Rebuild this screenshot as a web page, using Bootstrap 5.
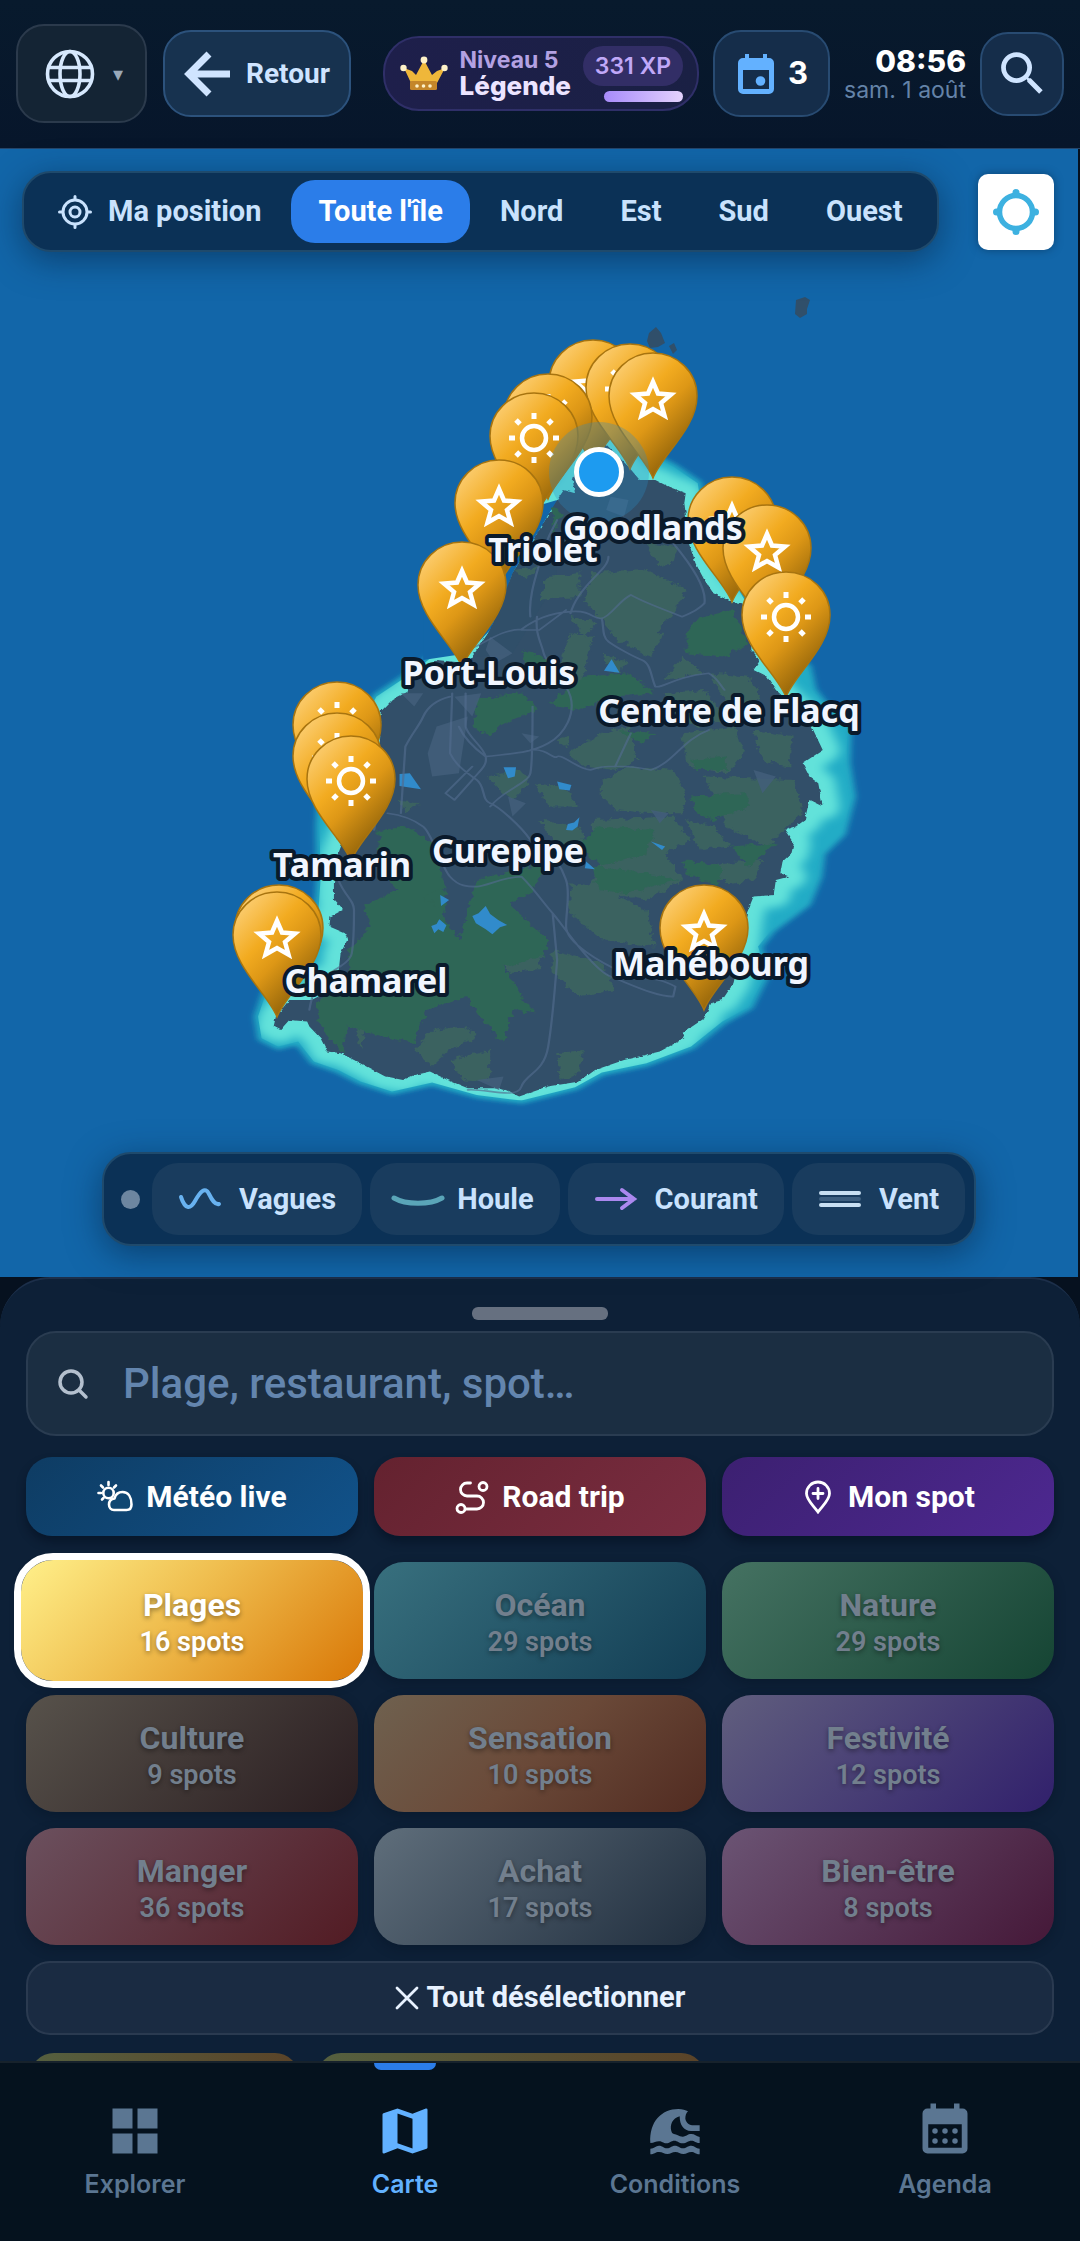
<!DOCTYPE html>
<html lang="fr">
<head>
<meta charset="utf-8">
<meta name="viewport" content="width=device-width, initial-scale=1">
<title>Carte des plages – Île Maurice</title>
<link href="https://cdn.jsdelivr.net/npm/bootstrap@5.3.0/dist/css/bootstrap.min.css" rel="stylesheet">
<style>
  body { background: #06111f; color: #cfe4ff; font-family: Roboto, "Liberation Sans", sans-serif; }
  button, a { text-decoration: none; }
  svg { display: block; flex-shrink: 0; }
  .inter { font-family: Inter, "Liberation Sans", sans-serif; }

  /* Top bar */
  .topbar { padding: 24px 16px 25px; background: linear-gradient(#081a2d, #07162b); border-bottom: 1px solid #24466c; }
  .tb-end { gap: 14px; }
  .tb-btn { border: 2px solid #284b72; background: #152d4a; color: #cfe4ff; height: 87px; border-radius: 28px; }
  .lang-btn { border-color: #2b3a4c; background: #142434; height: 99px; width: 131px; padding-left: 27px; gap: 18px; }
  .lang-btn small { font-size: 20px; color: #9aa9ba; }
  .back-btn { background: #17324f; border-color: #2c527c; padding: 0 19px; gap: 16px; font-size: 28px; font-weight: 700; }
  .level-pill { height: 75px; border: 2px solid #2f2f68; background: linear-gradient(90deg, #1e1f4b, #1a2044); border-radius: 36px; padding: 0 14px 0 15px; gap: 12px; color: #ece4ff; }
  .level-name { font-size: 23px; font-weight: 700; line-height: 24px; color: #b3a1e2; }
  .level-rank { font-size: 26px; font-weight: 800; line-height: 28px; }
  .xp-side { gap: 5px; }
  .xp-badge { background: #322e66; color: #c0a8f8; font-size: 23px; font-weight: 600; line-height: 40px; border-radius: 20px; padding: 0 12px; }
  .xp-bar { width: 79px; height: 11px; border-radius: 6px; background: linear-gradient(90deg, #a78bfa, #e4d2fd); }
  .cal-btn { padding: 0 20px 0 23px; gap: 14px; color: #fff; font-size: 31px; font-weight: 700; }
  .clock { font-size: 30px; line-height: 32px; font-weight: 800; color: #fff; }
  .day { font-size: 23px; line-height: 26px; color: #6483a8; }
  .find-btn { width: 84px; height: 84px; }

  /* Map */
  .map-wrap { margin-right: 2px; background: #1266a9; position: relative; }
  .map-wrap > svg { width: 100%; height: auto; }
  .map-top { position: absolute; top: 22px; left: 22px; right: 24px; }
  .map-panel { background: #0b3156; border: 2px solid #1f4a6c; border-radius: 29px; box-shadow: 0 8px 34px rgba(5, 35, 65, .55); }
  .zones { padding: 7px; gap: 3px; }
  .zone-btn { border: 0; background: none; color: #c9e2fd; font-size: 29px; font-weight: 700; line-height: 63px; padding: 0 27px; border-radius: 24px; white-space: nowrap; gap: 16px; }
  .zone-btn.active { background: #2b7de9; color: #fff; }
  .locate-btn { width: 76px; height: 76px; border: 0; border-radius: 10px; background: #fff; box-shadow: 0 0 8px rgba(5, 35, 65, .5); }
  .map-bottom { position: absolute; bottom: 31px; left: 0; right: 0; }
  .layers { padding: 9px; gap: 8px; }
  .layer-btn { border: 0; background: #193c5e; color: #c9e2fd; font-size: 29px; font-weight: 700; line-height: 72px; border-radius: 26px; padding: 0 26px; gap: 17px; }
  .pulse-dot { width: 19px; height: 19px; border-radius: 50%; background: #6d86a0; margin: 0 4px 0 8px; }
  .place { font: 700 34px "Noto Sans", sans-serif; fill: #f1f6ff; stroke: #0a1a2b; stroke-width: 8px; stroke-linejoin: round; paint-order: stroke; text-anchor: middle; }

  /* Bottom sheet */
  .sheet { background: #0d2037; border-top: 2px solid #1c2f4a; border-radius: 50px 50px 0 0; padding: 28px 26px 0; }
  .grabber { width: 136px; height: 13px; border-radius: 6px; background: #667080; }
  .find-box { margin-top: 11px; height: 105px; border: 2px solid #2a3c51; border-radius: 30px; background: #1b2e42; padding: 0 30px; gap: 33px; }
  .find-box input { background: transparent; border: 0; color: #fff; font-size: 42px; font-weight: 500; padding: 0; box-shadow: none; }
  .find-box input:focus { background: transparent; box-shadow: none; color: #fff; }
  .find-box input::placeholder { color: #6385ae; opacity: 1; }
  .quick-row { margin-top: 5px; }
  .tile-row { margin-top: 10px; }
  .quick { height: 79px; border: 0; border-radius: 26px; color: #fff; font-size: 30px; font-weight: 700; gap: 13px; box-shadow: 0 6px 10px rgba(3, 12, 26, .45); }
  .q-live { background: linear-gradient(135deg, #0e3c63, #11528a); }
  .q-trip { background: linear-gradient(135deg, #64222f, #7a2d41); }
  .q-spot { background: linear-gradient(135deg, #3c2071, #4d2890); }
  .tile { height: 117px; border: 0; border-radius: 30px; padding: 6px 0 0; color: #727f8d; font-size: 32px; font-weight: 700; line-height: 37px; box-shadow: 0 4px 12px rgba(3, 12, 26, .3); text-shadow: 0 2px 5px rgba(0, 0, 0, .4); }
  .tile small { display: block; font-size: 27px; font-weight: 600; }
  .tile.active { color: #fff; height: 121px; margin: -2px -5px; border-radius: 32px; outline: 7px solid #fff; position: relative; z-index: 1; background: linear-gradient(135deg, #fff08a, #efbd4e 45%, #d97706); }
  .t-ocean { background: linear-gradient(135deg, #38707e, #123d54); }
  .t-nature { background: linear-gradient(135deg, #457262, #154433); }
  .t-culture { background: linear-gradient(135deg, #57524b, #2a1d20); }
  .t-sensation { background: linear-gradient(135deg, #6f614f, #6a4938 50%, #512b21); }
  .t-fete { background: linear-gradient(135deg, #605e7e, #31206c); }
  .t-manger { background: linear-gradient(135deg, #6b505e, #521b23); }
  .t-achat { background: linear-gradient(135deg, #5f6e7b, #202e3e); }
  .t-bien { background: linear-gradient(135deg, #6b5474, #451838); }
  .clear-btn { height: 74px; margin-top: 16px; border: 2px solid #2a3a50; border-radius: 24px; background: #1a2b42; color: #e8f2ff; font-size: 29px; font-weight: 700; gap: 8px; }
  .chip-peek { height: 26px; padding: 18px 4px 0; overflow: hidden; gap: 18px; }
  .chip-peek button { border: 0; height: 60px; width: 269px; border-radius: 24px; background: linear-gradient(90deg, #55603f, #5a4328); }
  .chip-peek .wide { width: 388px; }

  /* Tab bar */
  .tabbar { background: #05121e; border-top: 2px solid #17222c; min-height: 180px; }
  .tabbar a { color: #5b7692; font-size: 25px; font-weight: 600; line-height: 30px; padding-top: 38px; position: relative; }
  .tabbar a.active { color: #62b1ff; }
  .tabbar a.active::before { content: ""; position: absolute; top: 0; left: 50%; margin-left: -31px; width: 62px; height: 7px; background: #2b7de9; border-radius: 0 0 7px 7px; }
</style>
<script src="https://cdn.jsdelivr.net/npm/bootstrap@5.3.0/dist/js/bootstrap.bundle.min.js"></script>
</head>
<body>

<header class="topbar">
  <div class="d-flex align-items-center">
    <button class="tb-btn lang-btn d-flex align-items-center" aria-label="Langue">
      <svg width="50" height="50" viewBox="0 0 50 50" fill="none" stroke="#d6e8fd" stroke-width="3.600"><circle cx="25" cy="25" r="22.500"/><ellipse cx="25" cy="25" rx="10" ry="22.500"/><path d="M4 18.500h42M4 31.500h42"/></svg>
      <small aria-hidden="true">▾</small>
    </button>
    <button class="tb-btn back-btn d-flex align-items-center ms-3">
      <svg width="46" height="46" viewBox="0 0 46 46" fill="none" stroke="currentColor" stroke-width="7"><path d="M25 3 5 23l20 20M5 23h41"/></svg>
      Retour
    </button>
    <div class="tb-end d-flex align-items-center ms-auto">
      <div class="level-pill d-flex align-items-center inter">
        <svg width="48" height="36" viewBox="0 0 48 36"><path d="M4 12 12 15 16 19 24 4 32 19 37 15 45 12 37 27H11Z" fill="#efb73a"/><rect x="10" y="25" width="27" height="9" rx="1.500" fill="#c4862a"/><g fill="#fdf1c8"><circle cx="3.500" cy="12" r="3.200"/><circle cx="24" cy="4" r="3.400"/><circle cx="44.500" cy="12" r="3.200"/><circle cx="17" cy="30" r="1.800"/><circle cx="23.500" cy="30" r="1.800"/><circle cx="30" cy="30" r="1.800"/></g></svg>
        <div>
          <div class="level-name">Niveau 5</div>
          <div class="level-rank">Légende</div>
        </div>
        <div class="xp-side d-flex flex-column align-items-end">
          <span class="xp-badge">331 XP</span>
          <span class="xp-bar"></span>
        </div>
      </div>
      <button class="tb-btn cal-btn d-flex align-items-center inter">
        <svg width="36" height="40" viewBox="0 0 36 40" fill="#63b1ff"><path fill-rule="evenodd" d="M7 0h4v4h14V0h4v4h2a5 5 0 0 1 5 5v26a5 5 0 0 1-5 5H5a5 5 0 0 1-5-5V9a5 5 0 0 1 5-5h2ZM5 16v19h26V16Z"/><circle cx="22.500" cy="27" r="4.800"/></svg>
        3
      </button>
      <div class="text-end">
        <div class="clock inter">08:56</div>
        <div class="day inter">sam. 1 août</div>
      </div>
      <button class="tb-btn find-btn d-flex align-items-center justify-content-center" aria-label="Rechercher">
        <svg width="57" height="57" viewBox="0 0 24 24" fill="currentColor"><path d="M9.500 3A6.500 6.500 0 0 1 16 9.500c0 1.610-.590 3.090-1.560 4.230l.270.270h.790l5 5-1.500 1.500-5-5v-.790l-.270-.270A6.516 6.516 0 0 1 9.500 16a6.500 6.500 0 0 1 0-13m0 2C7 5 5 7 5 9.500S7 14 9.500 14 14 12 14 9.500 12 5 9.500 5"/></svg>
      </button>
    </div>
  </div>
</header>

<main>
<section class="map-wrap">
  <svg viewBox="0 149 1078 1128" role="img" aria-label="Carte de l'île Maurice">
    <defs>
      <linearGradient id="pinShade" x1="0.200" y1="0.050" x2="0.750" y2="0.800">
        <stop offset="0" stop-color="#fbcb6c"/><stop offset=".38" stop-color="#f2ab20"/><stop offset=".62" stop-color="#dd9716"/><stop offset="1" stop-color="#9a690b"/>
      </linearGradient>
      <filter id="soft" x="-10%" y="-10%" width="120%" height="120%"><feGaussianBlur stdDeviation="7"/></filter>
      <filter id="glow" x="-10%" y="-10%" width="120%" height="120%"><feGaussianBlur stdDeviation="12"/></filter>
      <filter id="ragged" x="-5%" y="-5%" width="110%" height="110%"><feTurbulence type="fractalNoise" baseFrequency=".06" numOctaves="3" seed="4"/><feDisplacementMap in="SourceGraphic" scale="22" xChannelSelector="R" yChannelSelector="G"/></filter>
      <filter id="coast" x="-5%" y="-5%" width="110%" height="110%"><feTurbulence type="fractalNoise" baseFrequency=".08" numOctaves="2" seed="9"/><feDisplacementMap in="SourceGraphic" scale="9" xChannelSelector="R" yChannelSelector="G"/></filter>
      <g id="pin">
        <path d="M0 0C-9-23-44-50-44-82A44 43 0 0 1 44-82C44-50 9-23 0 0Z" fill="url(#pinShade)" stroke="#a8740f" stroke-width="1.500"/>
      </g>
      <g id="starPin"><use href="#pin"/><path d="M0-96 5-84.500 18-83.500 8-75 11.500-62.500 0-69-11.500-62.500-8-75-18-83.500-5-84.500Z" fill="none" stroke="#fff" stroke-width="4.500"/></g>
      <g id="sunPin"><use href="#pin"/><g fill="none" stroke="#fff" stroke-width="4.500"><circle cy="-80" r="12"/><path stroke-width="5" d="M0-105v6M0-61v6M-25-80h6M19-80h6M-18-98l4 4M14-66l4 4M18-98l-4 4M-14-66l-4 4"/></g></g>
      <path id="land" d="M850 540 900 480 960 560 985 600 1020 600 1050 620 1088 640 1085 670 1090 720 1095 790 1110 850 1130 900 1150 940 1190 965 1215 970 1235 1060 1235 1110 1255 1140 1240 1170 1270 1190 1290 1230 1340 1290 1370 1340 1395 1410 1350 1450 1365 1490 1385 1510 1395 1580 1365 1560 1355 1620 1335 1640 1310 1650 1330 1690 1325 1720 1305 1745 1300 1780 1320 1790 1290 1800 1285 1845 1240 1850 1225 1900 1215 2000 1195 2110 1170 2160 1145 2170 1130 2215 1080 2260 1085 2275 1030 2315 950 2340 885 2370 850 2405 780 2420 715 2450 685 2430 660 2425 600 2425 555 2400 515 2375 480 2385 455 2400 415 2390 380 2365 345 2340 315 2320 285 2315 270 2275 245 2240 240 2225 200 2220 180 2250 165 2240 170 2210 200 2160 250 2160 265 2150 270 2100 310 2080 315 2020 330 1980 325 1960 290 1940 292 1910 320 1890 300 1860 300 1810 310 1720 330 1650 380 1560 400 1400 405 1295 430 1260 465 1235 480 1200 530 1140 600 1150 630 1090 650 1050 680 960 700 880 760 750 800 660 815 630 840 640 835 600Z"/>
      <path id="lagoon" d="M850 480 920 450 1000 520 1060 560 1115 610 1125 700 1150 800 1220 960 1300 1120 1360 1160 1372 1230 1395 1270 1430 1300 1450 1350 1448 1450 1460 1550 1438 1660 1392 1720 1385 1790 1360 1870 1280 1950 1250 2000 1268 2080 1230 2180 1170 2225 1100 2300 1000 2350 900 2378 840 2422 720 2462 620 2445 520 2408 430 2435 360 2405 310 2370 255 2345 220 2285 175 2300 138 2275 130 2210 148 2140 170 2120 250 2080 260 2000 265 1900 270 1800 268 1640 275 1500 330 1420 395 1250 485 1170 555 1090 600 1080 680 940 780 640Z"/>
      <clipPath id="inLagoon"><use href="#lagoon"/></clipPath>
    </defs>

    <g transform="translate(200 280) scale(.4464 .3333)">
      <use href="#lagoon" filter="url(#soft)" fill="#22acc6" stroke="#22acc6" stroke-width="18" stroke-linejoin="round"/>
      <g clip-path="url(#inLagoon)"><use href="#land" fill="none" stroke="#62e2da" stroke-width="76" stroke-linejoin="round" filter="url(#glow)"/></g>
      <use href="#land" fill="#304f69" filter="url(#coast)"/>
      <path d="M600 1120 650 1050 680 960 700 880 760 750 800 660 700 700 500 900 500 1140Z" fill="#1266a9"/>
      <path d="M620 1130 660 1020 700 880 790 700 800 900 700 1120Z" fill="#304f69"/>
      <g filter="url(#ragged)">
        <g fill="#3a6260">
          <path d="M1000 790 1070 800 1060 850 1030 860ZM780 890 850 880 850 950 760 960ZM880 880 1000 870 1090 930 1060 1000 1010 1080 940 1090 900 1020 860 960ZM700 870 760 860 730 900ZM830 1010 890 1030 860 1070ZM1080 1130 1130 1180 1040 1200ZM900 1120 960 1150 930 1180ZM1140 1180 1230 1190 1260 1260 1190 1290ZM830 1060 880 1070 860 1180 840 1260 800 1180ZM1040 1240 1130 1230 1180 1320 1110 1340 1060 1300ZM960 1030 1040 1060 1010 1130 960 1100Z"/>
          <path d="M820 1420 900 1360 960 1340 980 1440 930 1470 860 1460ZM1080 1360 1200 1340 1220 1420 1180 1480 1090 1460ZM1240 1350 1330 1370 1320 1460 1260 1440ZM900 1500 960 1460 1060 1470 1090 1540 1080 1600 1010 1600 930 1590 900 1550ZM640 1490 720 1470 740 1510 700 1560ZM750 1510 810 1520 850 1580 780 1580ZM880 1620 1060 1610 1100 1680 1040 1720 900 1740 880 1680ZM1130 1490 1330 1500 1350 1600 1270 1700 1180 1640ZM900 1740 1040 1720 1080 1800 1000 1860 870 1830ZM830 1810 900 1820 1000 1890 1020 2000 900 1980 830 1900ZM1120 1760 1260 1740 1240 1800 1180 1810ZM680 2040 770 2010 760 2070 690 2080ZM790 2010 900 2050 930 2130 850 2150 790 2080ZM520 2250 590 2240 620 2270 560 2310 520 2360 480 2310ZM560 2340 650 2310 650 2410 590 2400ZM800 2320 860 2310 850 2380 810 2400ZM350 2250 370 2240 360 2310ZM440 1560 490 1570 460 1600ZM800 1380 830 1370 820 1400ZM660 1800 740 1760 700 1830ZM760 1620 850 1640 870 1720 800 1700ZM1090 1620 1150 1640 1190 1700 1120 1710Z"/>
        </g>
        <g fill="#2f6656">
          <path d="M1120 1010 1190 990 1230 1090 1180 1130 1090 1120 1090 1060ZM720 1110 790 1140 740 1180ZM860 1190 960 1180 1020 1240 920 1250 850 1290 780 1270ZM620 1260 720 1240 760 1290 680 1330 650 1370 610 1340ZM940 1350 1020 1360 990 1390ZM1100 1440 1180 1430 1180 1470 1110 1470ZM1100 1550 1220 1540 1230 1580 1150 1620 1110 1600ZM890 1640 1020 1650 1000 1720 900 1760 850 1700ZM1080 1740 1170 1760 1160 1820 1090 1780ZM1190 1700 1290 1690 1230 1760ZM880 1760 1000 1780 1070 1800 960 1840 890 1830Z"/>
          <path d="M400 1650 470 1640 530 1700 550 1830 540 1900 580 1980 620 1800 780 1750 740 1840 690 1870 780 1980 770 2030 680 2060 720 2150 750 2200 700 2190 680 2290 640 2230 600 2150 510 2190 480 2290 410 2270 330 2240 320 2320 270 2240 260 2170 340 2080 330 2020 380 1940 370 1880 440 1830 400 1760Z"/>
          <path d="M790 680 810 700 790 760ZM500 1850 545 1820 550 1900Z"/>
        </g>
      </g>
      <g fill="#435f7c" opacity=".8">
        <path d="M530 1340 600 1310 580 1480 520 1490 510 1420ZM450 1240 500 1240 480 1280ZM570 1250 630 1240 610 1310ZM650 1070 700 1120 660 1150 640 1110ZM920 650 960 660 950 710 910 690ZM720 1360 760 1370 740 1390ZM1240 1470 1290 1490 1260 1540ZM1010 1590 1050 1600 1030 1630ZM620 2400 680 2390 670 2430ZM690 1550 730 1570 700 1610Z"/>
      </g>
      <g fill="#318bcb">
        <path d="M922 1138 940 1178 905 1172ZM447 1482 470 1480 495 1528 447 1518ZM680 1462 708 1462 705 1490 690 1495ZM800 1505 832 1515 828 1532 805 1528ZM820 1650 824 1632 838 1628 850 1612 846 1640 834 1652ZM865 1745 885 1768 862 1765ZM1010 1685 1042 1700 1035 1710ZM610 1908 624 1900 640 1878 650 1902 668 1920 688 1935 672 1942 655 1963 640 1948 618 1930ZM538 1845 558 1860 540 1878ZM518 1938 530 1932 536 1918 552 1936 545 1956 534 1948 525 1960Z"/>
      </g>
      <g fill="none" stroke="#526c8e" stroke-width="5" opacity=".65" stroke-linejoin="round" stroke-linecap="round">
        <path d="M600 1110C640 1090 670 1050 720 1048C750 1020 780 1000 830 995S880 1020 900 1015 940 960 965 945C990 965 1040 990 1080 1010C1100 1000 1120 985 1130 970C1135 930 1110 870 1060 790M830 1000C840 950 870 910 885 890S915 850 915 830M740 1010C735 950 755 880 765 830S785 760 800 720M720 1050 760 1050 820 990M900 1015C905 1040 900 1070 915 1085S970 1130 990 1140 1010 1190 1020 1220C1040 1225 1060 1190 1140 1180C1160 1195 1165 1215 1175 1230M755 1010C750 1060 765 1090 770 1120S820 1200 830 1250 820 1360 780 1390 700 1420 640 1430C610 1400 590 1370 580 1340M565 1240 560 1420C575 1460 600 1480 620 1500S630 1560 650 1570 720 1640 740 1680M595 1240 595 1340C600 1370 635 1400 640 1430S620 1480 610 1500L570 1560 550 1540 610 1460M450 1600 460 1400C475 1360 490 1340 500 1310S530 1260 560 1250M650 1580C680 1530 735 1510 740 1480S745 1340 745 1280M740 1410C780 1405 790 1440 800 1430S860 1480 880 1468 960 1455 1010 1470C1060 1450 1080 1380 1140 1350M420 1600C450 1605 480 1620 500 1640S540 1760 560 1790 600 1820 620 1820 680 1790 720 1790C750 1830 770 1870 790 1900S880 2070 920 2090 1020 2150 1060 2150L1065 2120C1040 2100 1010 2095 980 2090M760 1680C790 1720 810 1760 820 1800S820 1890 820 1940 900 2050 950 2080M790 1900 800 2040C795 2130 790 2220 780 2300S730 2380 720 2420 640 2425 600 2430M400 1590 390 1650M310 1800C325 1850 345 1860 345 1890S345 1980 340 2020 270 2080 260 2120 250 2150 245 2190M965 1360 930 1460"/>
      </g>
    </g>
    <g fill="#304f6a"><path d="M796 300l9-3 5 3-3 9v5l-7 4-5-4ZM649 333l7-6 5 6 4 10-7 4-8 1-3-7ZM669 346l5-3 3 7-4 4Z"/></g>

    <use href="#starPin" x="593" y="465"/>
    <use href="#sunPin" x="630" y="469"/>
    <use href="#starPin" x="653" y="478"/>
    <use href="#sunPin" x="548" y="499"/>
    <use href="#sunPin" x="534" y="518"/>
    <use href="#starPin" x="499" y="585"/>
    <use href="#starPin" x="462" y="667"/>
    <use href="#starPin" x="732" y="602"/>
    <use href="#starPin" x="767" y="630"/>
    <use href="#sunPin" x="786" y="697"/>
    <use href="#sunPin" x="337" y="807"/>
    <use href="#sunPin" x="337" y="838"/>
    <use href="#sunPin" x="351" y="861"/>
    <use href="#starPin" x="279" y="1010"/>
    <use href="#starPin" x="277" y="1017"/>
    <use href="#starPin" x="704" y="1010"/>
    <circle cx="599" cy="472" r="50" fill="#2b8bc4" opacity=".3"/>
    <circle cx="599" cy="472" r="22.500" fill="#1d9bf0" stroke="#fff" stroke-width="5"/>

    <text class="place" x="543" y="562">Triolet</text>
    <text class="place" x="653" y="540">Goodlands</text>
    <text class="place" x="489" y="685">Port-Louis</text>
    <text class="place" x="729" y="723">Centre de Flacq</text>
    <text class="place" x="508" y="863">Curepipe</text>
    <text class="place" x="342" y="877">Tamarin</text>
    <text class="place" x="366" y="993">Chamarel</text>
    <text class="place" x="711" y="976">Mahébourg</text>
  </svg>

  <div class="map-top d-flex justify-content-between align-items-center">
    <div class="map-panel zones d-flex">
      <button class="zone-btn d-flex align-items-center">
        <svg width="34" height="34" viewBox="0 0 34 34" fill="none" stroke="currentColor" stroke-width="3" stroke-linecap="round"><circle cx="17" cy="17" r="12"/><circle cx="17" cy="17" r="5"/><path d="M17 1.500v3M17 29.500v3M1.500 17h3M29.500 17h3"/></svg>
        Ma position
      </button>
      <button class="zone-btn active">Toute l'île</button>
      <button class="zone-btn">Nord</button>
      <button class="zone-btn">Est</button>
      <button class="zone-btn">Sud</button>
      <button class="zone-btn">Ouest</button>
    </div>
    <button class="locate-btn d-flex align-items-center justify-content-center p-0" aria-label="Me localiser">
      <svg width="46" height="46" viewBox="0 0 46 46" fill="none" stroke="#3db1e0"><circle cx="23" cy="23" r="16.500" stroke-width="5.500"/><path d="M23 3.500v2M23 40.500v2M3.500 23h2M40.500 23h2" stroke-width="7" stroke-linecap="round"/></svg>
    </button>
  </div>

  <div class="map-bottom d-flex justify-content-center">
    <div class="map-panel layers d-flex align-items-center">
      <span class="pulse-dot"></span>
      <button class="layer-btn d-flex align-items-center"><svg width="44" height="24" viewBox="0 0 44 24" fill="none" stroke="#68b2f0" stroke-width="4" stroke-linecap="round"><path d="M3 10C7 22 12 23 17 14S27-1 31 7C34 13 37 18 41 17"/></svg>Vagues</button>
      <button class="layer-btn d-flex align-items-center"><svg width="44" height="24" viewBox="0 0 44 24" fill="none" stroke="#5aa5b8" stroke-width="5" stroke-linecap="round" overflow="visible"><path d="M-2 11C10 18 34 18 46 11"/></svg>Houle</button>
      <button class="layer-btn d-flex align-items-center"><svg width="44" height="24" viewBox="0 0 44 24" fill="none" stroke="#ab88ee" stroke-width="4" stroke-linecap="round"><path d="M3 12h37M28 3l12 9-12 9"/></svg>Courant</button>
      <button class="layer-btn d-flex align-items-center"><svg width="44" height="24" viewBox="0 0 44 24" fill="none" stroke="#c8dff2" stroke-width="4" stroke-linecap="round"><path d="M3 12h38" stroke="#3d5f80"/><path d="M3 6h38M3 18h38"/></svg>Vent</button>
    </div>
  </div>
</section>

<section class="sheet">
  <div class="grabber mx-auto"></div>
  <div class="find-box d-flex align-items-center">
    <label for="spotSearch" aria-label="Rechercher"><svg width="32" height="32" viewBox="0 0 32 32" fill="none" stroke="#b4c0ce" stroke-width="3.500" stroke-linecap="round"><circle cx="13" cy="14" r="11"/><path d="m21 22 7 7"/></svg></label>
    <input id="spotSearch" type="text" class="form-control" placeholder="Plage, restaurant, spot…">
  </div>

  <div class="quick-row row g-3">
    <div class="col-4"><button class="quick q-live w-100 d-flex align-items-center justify-content-center">
      <svg width="36" height="36" viewBox="0 0 36 36" fill="none" stroke="#fff" stroke-width="2.600" stroke-linecap="round" stroke-linejoin="round"><circle cx="11.500" cy="14" r="5.200"/><path d="M11.500 3v3M4 6.500l2 2M1.500 14h2.500M19 6.500l-2 2M5 20.500l1.500-1.500"/><path d="M17 31h12.500c3.500 0 5-2.500 5-5.500 0-7-3-12.500-9-12.500-4 0-7 2.500-8 6.500-3.500.500-5.500 3-5.500 6s2 5.500 5 5.500Z" fill="#104772"/></svg>Météo live</button></div>
    <div class="col-4"><button class="quick q-trip w-100 d-flex align-items-center justify-content-center">
      <svg width="34" height="34" viewBox="0 0 34 34" fill="none" stroke="#fff" stroke-width="2.800" stroke-linecap="round"><circle cx="28" cy="6.500" r="4"/><circle cx="6" cy="28.500" r="4"/><path d="M15.500 3H12a6.500 6.500 0 0 0 0 13h10a6.500 6.500 0 0 1 0 13H11"/></svg>Road trip</button></div>
    <div class="col-4"><button class="quick q-spot w-100 d-flex align-items-center justify-content-center">
      <svg width="34" height="34" viewBox="0 0 34 34" fill="none" stroke="#fff" stroke-width="2.800" stroke-linecap="round"><path d="M17 32C12 25 5.500 20 5.500 13.500a11.500 11.500 0 0 1 23 0C28.500 20 22 25 17 32Z"/><path d="M17 8.500v10M12 13.500h10"/></svg>Mon spot</button></div>
  </div>

  <div class="tile-row row g-3">
    <div class="col-4 d-grid"><button class="tile active">Plages<small>16 spots</small></button></div>
    <div class="col-4 d-grid"><button class="tile t-ocean">Océan<small>29 spots</small></button></div>
    <div class="col-4 d-grid"><button class="tile t-nature">Nature<small>29 spots</small></button></div>
    <div class="col-4 d-grid"><button class="tile t-culture">Culture<small>9 spots</small></button></div>
    <div class="col-4 d-grid"><button class="tile t-sensation">Sensation<small>10 spots</small></button></div>
    <div class="col-4 d-grid"><button class="tile t-fete">Festivité<small>12 spots</small></button></div>
    <div class="col-4 d-grid"><button class="tile t-manger">Manger<small>36 spots</small></button></div>
    <div class="col-4 d-grid"><button class="tile t-achat">Achat<small>17 spots</small></button></div>
    <div class="col-4 d-grid"><button class="tile t-bien">Bien-être<small>8 spots</small></button></div>
  </div>

  <button class="clear-btn w-100 d-flex align-items-center justify-content-center">
    <svg width="24" height="24" viewBox="0 0 24 24" fill="none" stroke="currentColor" stroke-width="2.800" stroke-linecap="round"><path d="m2 2 20 20M22 2 2 22"/></svg>Tout désélectionner
  </button>
  <div class="chip-peek d-flex"><button aria-label="Filtre"></button><button class="wide" aria-label="Filtre"></button></div>
</section>
</main>

<nav class="tabbar d-flex inter text-center">
  <a href="#" class="flex-fill w-25"><svg class="mx-auto mb-2" width="60" height="60" viewBox="0 0 24 24" fill="currentColor"><path d="M3 11h8V3H3m0 18h8v-8H3m10 8h8v-8h-8m0-10v8h8V3"/></svg>Explorer</a>
  <a href="#" class="flex-fill w-25 active" aria-current="page"><svg class="mx-auto mb-2" width="60" height="60" viewBox="0 0 24 24" fill="currentColor"><path d="M15 19l-6-2.110V5l6 2.110M20.500 3h-.160L15 5.100 9 3 3.360 4.900c-.210.070-.360.250-.360.480V20.500a.500.500 0 0 0 .500.500c.050 0 .110 0 .160-.030L9 18.900l6 2.100 5.640-1.900c.210-.100.360-.250.360-.480V3.500a.500.500 0 0 0-.500-.500Z"/></svg>Carte</a>
  <a href="#" class="flex-fill w-25"><svg class="mx-auto mb-2" width="60" height="60" viewBox="-16 -24 180 180" fill="currentColor"><path d="M0 102C-4 38 34 0 84 0c12 0 22 3 29 7-6 6-8 13-8 22 2 13 13 20 25 20h18v17h-26C100 66 88 48 88 22 66 28 58 48 63 66c1 5 3 8 8 9 8 1 14 7 26 8 12-1 14-8 26-8 10 0 15 7 25 9v18c-12 0-15-7-25-7s-14 8-26 8-15-8-25-8-14 8-24 8-12-6-22-6-14 5-26 5Z"/><path d="M0 119c12 0 16-9 26-9s14 8 24 8 14-8 24-8 14 8 24 8 14-8 25-8 13 9 25 9v17c-12 0-15-7-25-7s-14 6-24 6-14-6-24-6-14 6-24 6-14-6-25-6-14 7-26 7Z"/></svg>Conditions</a>
  <a href="#" class="flex-fill w-25"><svg class="mx-auto mb-2" width="60" height="60" viewBox="0 0 24 24" fill="currentColor"><path fill-rule="evenodd" d="M6.200 1h2.200v2h7.200V1h2.200v2H19a2 2 0 0 1 2 2v14a2 2 0 0 1-2 2H5a2 2 0 0 1-2-2V5a2 2 0 0 1 2-2h1.200ZM5.300 9.300v9.400h13.400V9.300Z"/><circle cx="8" cy="12" r="1.100"/><circle cx="12" cy="12" r="1.100"/><circle cx="16" cy="12" r="1.100"/><circle cx="8" cy="16" r="1.100"/><circle cx="12" cy="16" r="1.100"/><circle cx="16" cy="16" r="1.100"/></svg>Agenda</a>
</nav>
</body>
</html>
